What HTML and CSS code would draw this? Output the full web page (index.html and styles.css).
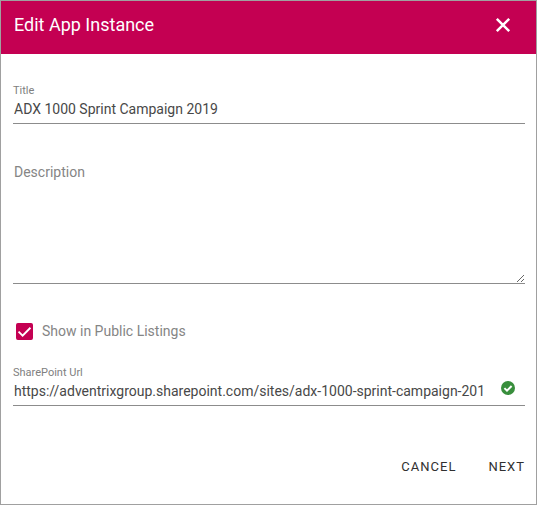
FILE: index.html
```html
<!DOCTYPE html>
<html lang="en">
<head>
<meta charset="utf-8">
<meta name="viewport" content="width=device-width, initial-scale=1">
<title>Edit App Instance</title>
<link rel="stylesheet" href="styles.css">
</head>
<body>
<main class="dialog">
  <header class="dialog-header">
    <h1 class="dialog-title">Edit App Instance</h1>
    <button class="close-button" type="button" aria-label="Close">
      <svg class="close-icon" viewBox="0 0 16 16" aria-hidden="true"><path d="M1.8 1.8 14.2 14.2M14.2 1.8 1.8 14.2"/></svg>
    </button>
  </header>
  <form class="dialog-form">
    <div class="field">
      <label class="field-label" for="title">Title</label>
      <div class="field-row">
        <input class="field-input" id="title" type="text" value="ADX 1000 Sprint Campaign 2019">
      </div>
    </div>
    <div class="field field-description">
      <textarea class="field-area" id="description" placeholder="Description" aria-label="Description"></textarea>
    </div>
    <label class="check-row">
      <input class="check-input" type="checkbox" checked>
      <svg class="check-box" viewBox="0 0 18 18" aria-hidden="true"><rect width="18" height="18" rx="2"/><path d="M2.7 9.2 7 13.4 15.3 5"/></svg>
      <span>Show in Public Listings</span>
    </label>
    <div class="field">
      <label class="field-label" for="url">SharePoint Url</label>
      <div class="field-row">
        <input class="field-input" id="url" type="text" value="https://adventrixgroup.sharepoint.com/sites/adx-1000-sprint-campaign-201">
        <svg class="valid-icon" viewBox="0 0 14 14" aria-hidden="true"><circle cx="7" cy="7" r="7"/><path d="M3.4 7.1 6 9.6 10.6 5"/></svg>
      </div>
    </div>
    <div class="actions">
      <button class="action" type="button">CANCEL</button>
      <button class="action" type="submit">NEXT</button>
    </div>
  </form>
</main>
</body>
</html>
```

FILE: styles.css
```css
* {
  box-sizing: border-box;
}

body {
  margin: 0;
  font-family: Roboto, "Liberation Sans", sans-serif;
  font-size: 14px;
  line-height: 20px;
  color: #484848;
  background: #fff;
}

button,
input,
textarea {
  margin: 0;
  padding: 0;
  border: 0;
  background: none;
  color: inherit;
  font: inherit;
}

.dialog {
  display: flex;
  flex-direction: column;
  min-height: 100vh;
  border: 1px solid #a0a0a0;
}

.dialog-header {
  display: flex;
  align-items: center;
  justify-content: space-between;
  padding: 12px 25px 17px 13px;
  background: #c40052;
  color: #fff;
}

.dialog-title {
  margin: 0;
  font-size: 18px;
  font-weight: 400;
  line-height: 24px;
}

.close-button {
  display: flex;
}

.close-icon {
  width: 16px;
  height: 16px;
  fill: none;
  stroke: #fff;
  stroke-width: 2.5;
}

.dialog-form {
  display: flex;
  flex-direction: column;
  padding: 29px 11px 24px 12px;
}

.field {
  display: flex;
  flex-direction: column;
  padding-bottom: 4px;
  border-bottom: 1px solid #8c8c8c;
}

.field-label {
  font-size: 11px;
  line-height: 16px;
  color: #808080;
}

.field-input {
  flex: 1;
  min-width: 0;
  height: 20px;
  padding-left: 1px;
}

.field-description {
  margin: 38px 0 37px;
  padding-bottom: 0;
}

.field-area {
  height: 121px;
  padding-left: 1px;
  resize: vertical;
}

.field-area::placeholder {
  color: #858585;
  opacity: 1;
}

.check-row {
  position: relative;
  display: flex;
  align-items: center;
  gap: 9px;
  padding-left: 3px;
  margin-bottom: 24px;
  color: #858585;
}

.check-input {
  position: absolute;
  width: 17px;
  height: 17px;
  opacity: 0;
}

.check-box {
  width: 17px;
  height: 17px;
  fill: #c40052;
}

.check-box path {
  fill: none;
  stroke: #fff;
  stroke-width: 2;
}

.field-row {
  display: flex;
  gap: 4px;
}

.valid-icon {
  width: 14px;
  height: 14px;
  margin-right: 10px;
  fill: #388e3c;
}

.valid-icon path {
  fill: none;
  stroke: #fff;
  stroke-width: 2;
}

.actions {
  display: flex;
  justify-content: flex-end;
  gap: 32px;
  margin-top: 51px;
}

.action {
  font-size: 13px;
  letter-spacing: 1px;
  color: #303030;
}
```
